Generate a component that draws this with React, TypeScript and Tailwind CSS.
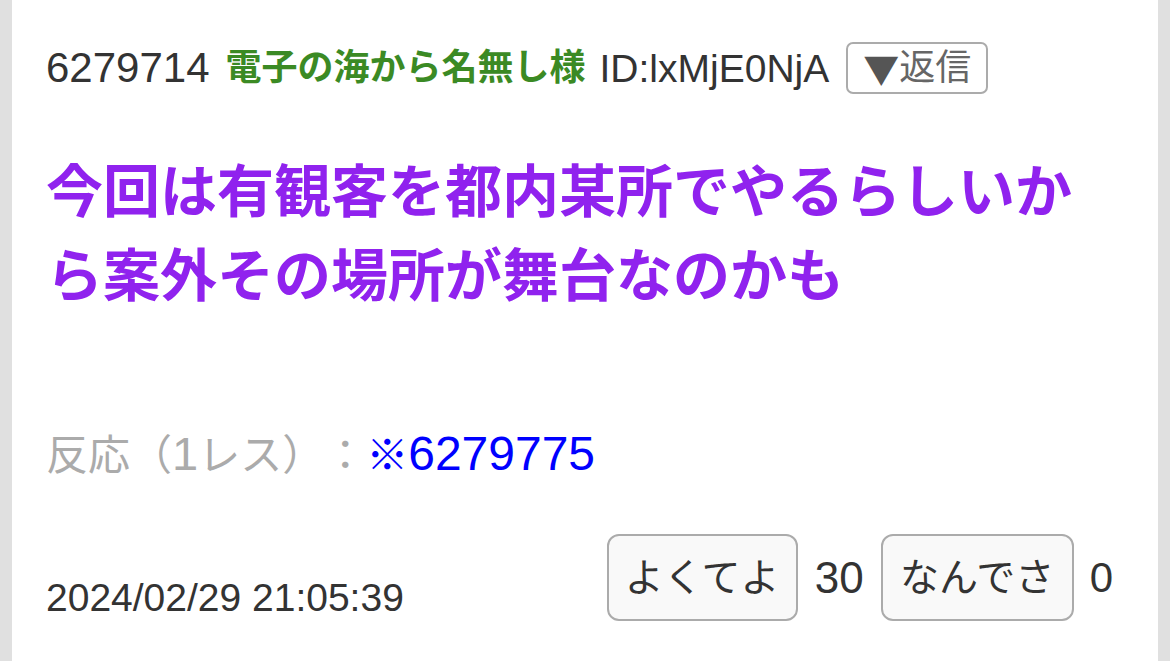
import React from "react";

const font = { fontFamily: '"Liberation Sans", "Noto Sans CJK JP", sans-serif' };
const cjk = { fontFamily: '"Noto Sans CJK JP", sans-serif' };

export default function App() {
  return (
    <div className="flex min-h-screen w-full bg-[#e0e0e0] [text-spacing-trim:space-all]" style={font}>
      <div className="w-[12px] shrink-0 bg-[#e0e0e0]" />
      <main className="flex-1 bg-white pl-[34px] pr-[34px] pt-[42px] text-[#333]">
        {/* header */}
        <div className="flex h-[52px] items-center whitespace-nowrap leading-none">
          <span className="text-[42px]">6279714</span>
          <span className="ml-[16px] text-[36px] font-bold text-[#3b8a24]">電子の海から名無し様</span>
          <span className="ml-[14px] text-[39px]">ID:lxMjE0NjA</span>
          <button className="ml-[17px] flex h-[52px] items-center rounded-[7px] border-[2.5px] border-[#ababab] bg-white px-[15px] text-[36px] leading-none text-[#666]">
            <span className="text-[#555]" style={cjk}>▼</span>
            <span>返信</span>
          </button>
        </div>

        {/* title */}
        <p className="mt-[56px] text-[57px] font-bold leading-[84px] text-[#9022ee]">
          今回は有観客を都内某所でやるらしいから案外その場所が舞台なのかも
        </p>

        {/* reaction */}
        <div className="mt-[112px] flex h-[50px] items-center whitespace-nowrap text-[42px] leading-[50px]">
          <span className="text-[#ababab]">
            反応（<span className="text-[47px]">1</span>レス）：
          </span>
          <a className="text-[#0000ff]">
            ※<span className="text-[48px]">6279775</span>
          </a>
        </div>

        {/* bottom row */}
        <div className="mt-[54px] flex items-end justify-between">
          <span className="mb-[5px] text-[39px] leading-[36px]">2024/02/29 21:05:39</span>
          <div className="mr-[11px] flex items-center gap-[17px] whitespace-nowrap">
            <button className="flex h-[87px] w-[191px] items-center justify-center rounded-[12px] border-[2.5px] border-[#ababab] bg-[#f9f9f9] text-[39px] leading-none text-[#333]">
              よくてよ
            </button>
            <span className="text-[44px] leading-none">30</span>
            <button className="flex h-[87px] w-[193px] items-center justify-center rounded-[12px] border-[2.5px] border-[#ababab] bg-[#f9f9f9] text-[39px] leading-none text-[#333]">
              なんでさ
            </button>
            <span className="-ml-[1px] text-[42px] leading-none">0</span>
          </div>
        </div>
      </main>
      <div className="w-[12px] shrink-0 bg-[#e0e0e0]" />
    </div>
  );
}
